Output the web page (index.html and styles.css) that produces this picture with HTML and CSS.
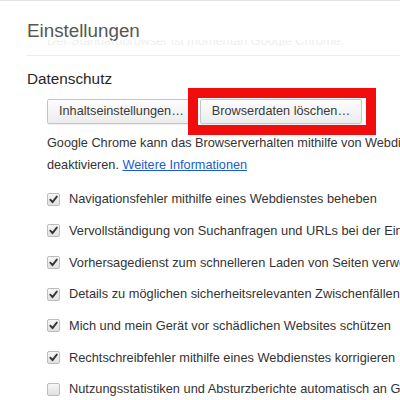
FILE: index.html
```html
<!DOCTYPE html>
<html lang="de">
<head>
<meta charset="utf-8">
<title>Einstellungen</title>
<link rel="stylesheet" href="styles.css">
</head>
<body>
<div class="page">
  <header class="header">
    <h1 class="title">Einstellungen</h1>
    <div class="ghost"><span class="ghost-text">Der Standardbrowser ist momentan Google Chrome.</span></div>
  </header>
  <section class="section">
    <h2 class="section-title">Datenschutz</h2>
    <div class="section-body">
      <div class="buttons">
        <button class="btn" type="button">Inhaltseinstellungen…</button>
        <span class="marked">
          <button class="btn" type="button">Browserdaten löschen…</button>
          <span class="mark"></span>
        </span>
      </div>
      <p class="desc">Google Chrome kann das Browserverhalten mithilfe von Webdiensten verbessern. Sie können diese Dienste optional<br>deaktivieren. <a class="link" href="#">Weitere Informationen</a></p>
      <ul class="checks">
        <li class="check-row"><span class="box checked"><svg viewBox="0 0 13 13" width="13" height="13"><polyline points="3.3,6.7 5.5,9.2 9.8,3.6" /></svg></span><span class="label">Navigationsfehler mithilfe eines Webdienstes beheben</span></li>
        <li class="check-row"><span class="box checked"><svg viewBox="0 0 13 13" width="13" height="13"><polyline points="3.3,6.7 5.5,9.2 9.8,3.6" /></svg></span><span class="label">Vervollständigung von Suchanfragen und URLs bei der Eingabe in die Adressleiste verwenden</span></li>
        <li class="check-row"><span class="box checked"><svg viewBox="0 0 13 13" width="13" height="13"><polyline points="3.3,6.7 5.5,9.2 9.8,3.6" /></svg></span><span class="label">Vorhersagedienst zum schnelleren Laden von Seiten verwenden</span></li>
        <li class="check-row"><span class="box checked"><svg viewBox="0 0 13 13" width="13" height="13"><polyline points="3.3,6.7 5.5,9.2 9.8,3.6" /></svg></span><span class="label">Details zu möglichen sicherheitsrelevanten Zwischenfällen an Google senden</span></li>
        <li class="check-row"><span class="box checked"><svg viewBox="0 0 13 13" width="13" height="13"><polyline points="3.3,6.7 5.5,9.2 9.8,3.6" /></svg></span><span class="label">Mich und mein Gerät vor schädlichen Websites schützen</span></li>
        <li class="check-row"><span class="box checked"><svg viewBox="0 0 13 13" width="13" height="13"><polyline points="3.3,6.7 5.5,9.2 9.8,3.6" /></svg></span><span class="label">Rechtschreibfehler mithilfe eines Webdienstes korrigieren</span></li>
        <li class="check-row"><span class="box"></span><span class="label">Nutzungsstatistiken und Absturzberichte automatisch an Google senden</span></li>
      </ul>
    </div>
  </section>
</div>
</body>
</html>
```
FILE: styles.css
```css
html, body {
  margin: 0;
  padding: 0;
  background: #ffffff;
  overflow: hidden;
}

body {
  font-family: "Liberation Sans", Arial, Helvetica, sans-serif;
  color: #333333;
}

.page {
  border-top: 1px solid #e2e2e2;
  white-space: nowrap;
}

.header {
  margin-left: 27px;
  padding-top: 19px;
  padding-bottom: 9px;
  border-bottom: 1px solid #ececec;
}

.title {
  margin: 0;
  font-size: 18.8px;
  line-height: 22px;
  font-weight: normal;
  color: #565656;
}

.ghost {
  margin-top: -2px;
  margin-left: 20px;
  height: 6px;
  overflow: hidden;
}

.ghost-text {
  display: block;
  margin-top: -6.4px;
  font-size: 12.7px;
  line-height: 14px;
  color: #efefef;
}

.section {
  margin-top: 14px;
  padding-left: 27px;
}

.section-title {
  margin: 0;
  font-size: 15.3px;
  line-height: 18px;
  font-weight: normal;
  color: #262626;
}

.section-body {
  padding-left: 20px;
}

.buttons {
  display: flex;
  gap: 4px;
  margin-top: 10.5px;
}

.btn {
  height: 25px;
  margin: 0;
  padding: 0 11px;
  border: 1px solid #c6c6c6;
  border-radius: 2px;
  background: linear-gradient(#fdfdfd, #ececec);
  box-shadow: 0 1px 0 rgba(0, 0, 0, 0.06);
  font-family: "Liberation Sans", Arial, Helvetica, sans-serif;
  font-size: 12.7px;
  color: #3a3a3a;
  line-height: 23px;
}

.marked {
  position: relative;
  display: flex;
}

.mark {
  position: absolute;
  top: -10.5px;
  left: -12px;
  right: -14px;
  bottom: -11.5px;
  border: 10px solid #f20d0d;
}

.desc {
  margin: 8.5px 0 0 0;
  font-size: 12.7px;
  line-height: 22px;
  color: #333333;
}

.link {
  color: #1a5bd0;
  text-decoration: underline;
}

.checks {
  list-style: none;
  margin: 7.3px 0 0 0;
  padding: 0;
}

.check-row {
  display: flex;
  align-items: center;
  gap: 9px;
  height: 31.7px;
  font-size: 12.8px;
  line-height: 16px;
  color: #333333;
}

.box {
  flex: none;
  width: 11px;
  height: 11px;
  border: 1px solid #bdbdbd;
  border-radius: 2px;
  background: linear-gradient(#f7f7f7, #e0e0e0);
  position: relative;
}

.box svg {
  position: absolute;
  left: -1px;
  top: -1px;
}

.box polyline {
  fill: none;
  stroke: #363636;
  stroke-width: 1.9;
  stroke-linecap: round;
  stroke-linejoin: round;
}
```
